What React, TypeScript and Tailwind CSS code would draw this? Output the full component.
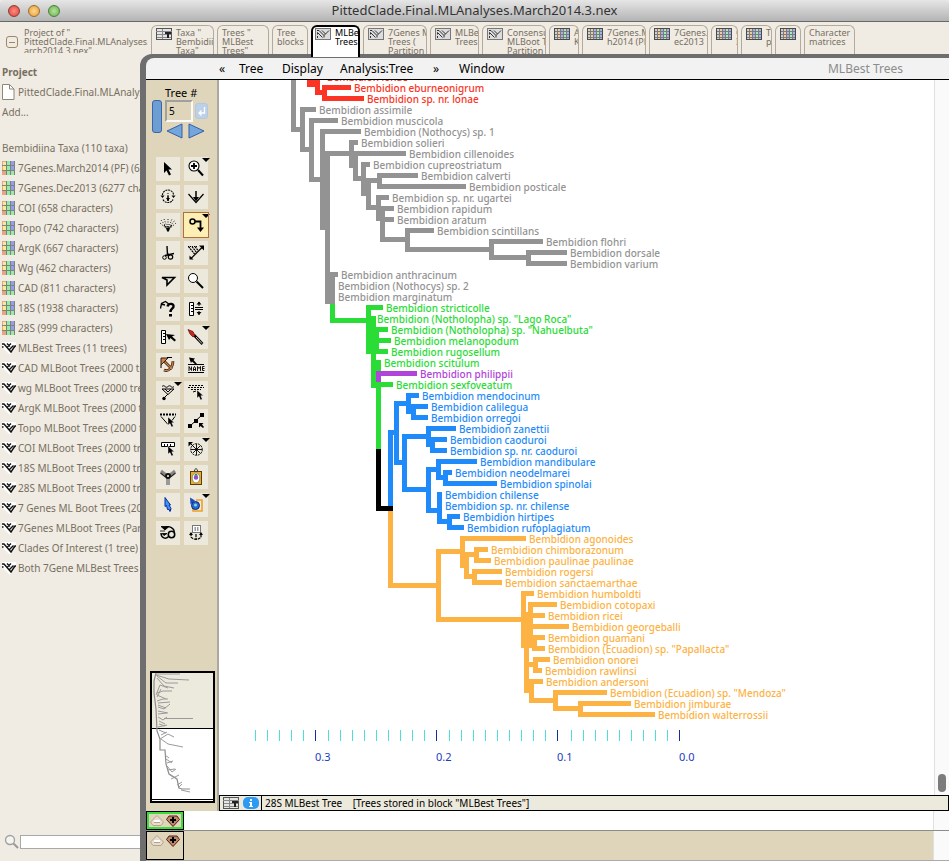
import type { ReactNode } from 'react';
import { clsx } from 'clsx';

type Rect = [number, number, number, number];

const FIRST_ROW = 107;
const ROW = 11;
const BAR = 5;

const GRAY = '#939393';
const RED = '#fb3425';
const GREEN = '#29dc36';
const PURPLE = '#b044d8';
const BLUE = '#1f8bfa';
const ORANGE = '#fdb244';

// color, start of the tip branch, end of the tip branch, taxon; top to bottom
const tips: [string, number, number, string][] = [
    [RED, 318, 324, 'Bembidion lonae'],
    [RED, 322, 351, 'Bembidion eburneonigrum'],
    [RED, 322, 364, 'Bembidion sp. nr. lonae'],
    [GRAY, 300, 316, 'Bembidion assimile'],
    [GRAY, 309, 338, 'Bembidion muscicola'],
    [GRAY, 320, 361, 'Bembidion (Nothocys) sp. 1'],
    [GRAY, 349, 358, 'Bembidion solieri'],
    [GRAY, 325, 406, 'Bembidion cillenoides'],
    [GRAY, 361, 370, 'Bembidion cupreostriatum'],
    [GRAY, 377, 418, 'Bembidion calverti'],
    [GRAY, 377, 466, 'Bembidion posticale'],
    [GRAY, 376, 389, 'Bembidion sp. nr. ugartei'],
    [GRAY, 376, 394, 'Bembidion rapidum'],
    [GRAY, 380, 394, 'Bembidion aratum'],
    [GRAY, 405, 434, 'Bembidion scintillans'],
    [GRAY, 489, 543, 'Bembidion flohri'],
    [GRAY, 526, 567, 'Bembidion dorsale'],
    [GRAY, 526, 567, 'Bembidion varium'],
    [GRAY, 325, 338, 'Bembidion anthracinum'],
    [GRAY, 325, 335, 'Bembidion (Nothocys) sp. 2'],
    [GRAY, 325, 335, 'Bembidion marginatum'],
    [GREEN, 366, 383, 'Bembidion stricticolle'],
    [GREEN, 366, 374, 'Bembidion (Notholopha) sp. "Lago Roca"'],
    [GREEN, 374, 388, 'Bembidion (Notholopha) sp. "Nahuelbuta"'],
    [GREEN, 374, 391, 'Bembidion melanopodum'],
    [GREEN, 366, 388, 'Bembidion rugosellum'],
    [GREEN, 371, 381, 'Bembidion scitulum'],
    [PURPLE, 376, 417, 'Bembidion philippii'],
    [GREEN, 371, 393, 'Bembidion sexfoveatum'],
    [BLUE, 406, 419, 'Bembidion mendocinum'],
    [BLUE, 406, 428, 'Bembidion calilegua'],
    [BLUE, 411, 428, 'Bembidion orregoi'],
    [BLUE, 426, 456, 'Bembidion zanettii'],
    [BLUE, 430, 447, 'Bembidion caoduroi'],
    [BLUE, 430, 447, 'Bembidion sp. nr. caoduroi'],
    [BLUE, 436, 477, 'Bembidion mandibulare'],
    [BLUE, 443, 452, 'Bembidion neodelmarei'],
    [BLUE, 443, 497, 'Bembidion spinolai'],
    [BLUE, 437, 442, 'Bembidion chilense'],
    [BLUE, 437, 442, 'Bembidion sp. nr. chilense'],
    [BLUE, 447, 460, 'Bembidion hirtipes'],
    [BLUE, 447, 464, 'Bembidion rufoplagiatum'],
    [ORANGE, 460, 526, 'Bembidion agonoides'],
    [ORANGE, 474, 488, 'Bembidion chimborazonum'],
    [ORANGE, 474, 491, 'Bembidion paulinae paulinae'],
    [ORANGE, 472, 502, 'Bembidion rogersi'],
    [ORANGE, 472, 502, 'Bembidion sanctaemarthae'],
    [ORANGE, 521, 534, 'Bembidion humboldti'],
    [ORANGE, 528, 557, 'Bembidion cotopaxi'],
    [ORANGE, 528, 545, 'Bembidion ricei'],
    [ORANGE, 528, 569, 'Bembidion georgeballi'],
    [ORANGE, 528, 545, 'Bembidion guamani'],
    [ORANGE, 532, 545, 'Bembidion (Ecuadion) sp. "Papallacta"'],
    [ORANGE, 533, 550, 'Bembidion onorei'],
    [ORANGE, 533, 542, 'Bembidion rawlinsi'],
    [ORANGE, 524, 543, 'Bembidion andersoni'],
    [ORANGE, 553, 607, 'Bembidion (Ecuadion) sp. "Mendoza"'],
    [ORANGE, 578, 631, 'Bembidion jimburae'],
    [ORANGE, 578, 655, 'Bembidion walterrossii'],
];

// Inner branches as x, y, width, height
const branches: [string, Rect[]][] = [
    [RED, [[307, 80, 8, 7], [315, 80, 5, 15], [315, 90, 7, 5], [322, 85, 5, 16]]],
    [GRAY, [
        [291, 80, 5, 52], [291, 127, 9, 5], [300, 107, 5, 45], [300, 147, 9, 5], [309, 118, 5, 64],
        [309, 177, 11, 5], [320, 129, 5, 101], [325, 151, 5, 153], [330, 272, 5, 32],
        [349, 140, 5, 28], [353, 156, 5, 25], [353, 176, 8, 5], [361, 162, 5, 34], [366, 178, 5, 32],
        [366, 178, 11, 5], [377, 173, 5, 16], [366, 205, 10, 5], [376, 195, 5, 26], [380, 206, 5, 36],
        [380, 237, 25, 5], [405, 228, 5, 24], [405, 247, 84, 5], [489, 239, 5, 21], [489, 255, 37, 5],
        [526, 250, 5, 16],
    ]],
    [GREEN, [
        [330, 304, 5, 19], [330, 318, 36, 5], [366, 305, 5, 49], [371, 316, 5, 72], [374, 327, 5, 27],
        [376, 360, 5, 11], [376, 382, 5, 67],
    ]],
    [PURPLE, [[376, 371, 5, 11]]],
    ['#000000', [[376, 449, 5, 62], [376, 506, 17, 5]]],
    [BLUE, [
        [388, 430, 5, 76], [388, 430, 6, 5], [394, 401, 5, 64], [394, 401, 12, 5], [406, 393, 5, 21],
        [411, 404, 5, 16], [394, 460, 8, 5], [402, 434, 5, 58], [402, 434, 24, 5], [426, 426, 5, 21],
        [430, 437, 5, 16], [402, 487, 24, 5], [426, 467, 5, 46], [426, 467, 10, 5], [436, 459, 5, 21],
        [436, 475, 7, 5], [443, 470, 5, 16], [426, 508, 11, 5], [437, 492, 5, 32], [437, 519, 10, 5],
        [447, 514, 5, 16],
    ]],
    [ORANGE, [
        [388, 511, 5, 77], [388, 583, 48, 5], [436, 549, 5, 73], [436, 549, 24, 5], [460, 536, 5, 32],
        [464, 552, 5, 27], [464, 552, 10, 5], [474, 547, 5, 16], [464, 574, 8, 5], [472, 569, 5, 16],
        [436, 617, 85, 5], [521, 591, 5, 57], [524, 612, 5, 81], [528, 602, 5, 46], [532, 635, 5, 16],
        [524, 662, 9, 5], [533, 657, 5, 16], [529, 679, 5, 24], [529, 698, 24, 5], [553, 690, 5, 21],
        [553, 706, 25, 5], [578, 701, 5, 16],
    ]],
];

const majorTicks: [number, string, number][] = [
    [315, '0.3', 5],
    [436, '0.2', 9],
    [557, '0.1', 9],
    [679, '0.0', 9],
];

function TreeCanvas() {
    return (
        <svg width="715" height="715" viewBox="219 80 715 715" className="block shrink-0" role="img" aria-label="28S MLBest Tree">
            <g shapeRendering="crispEdges">
                {branches.map(([color, rects]) =>
                    rects.map(([x, y, w, h], i) => <rect key={color + i} x={x} y={y} width={w} height={h} fill={color} />)
                )}
                {tips.map(([color, x1, x2, name], i) => (
                    <rect key={name} x={x1} y={FIRST_ROW + (i - 3) * ROW} width={x2 - x1} height={BAR} fill={color} />
                ))}
                {majorTicks.map(([x, label, minors]) => (
                    <g key={label}>
                        <rect x={x} y="730" width="1" height="11" fill="#12309c" />
                        {Array.from({ length: minors }, (_, i) => (
                            <rect key={i} x={x - 12 * (i + 1)} y="730" width="1" height="11" fill="#4fdcdc" />
                        ))}
                    </g>
                ))}
            </g>
            {tips.map(([color, , x2, name], i) => (
                <text key={name} x={x2 + 3} y={FIRST_ROW + (i - 3) * ROW + 7} fill={color} className="text-[10px] font-medium">
                    {name}
                </text>
            ))}
            {majorTicks.map(([x, label]) => (
                <text key={label} x={x} y="761" fill="#1c3cc0" className="text-[11px]">{label}</text>
            ))}
        </svg>
    );
}

/* ---------- small icons ---------- */

function TableIcon() {
    return (
        <svg width="16" height="12" viewBox="0 0 16 12" className="shrink-0" shapeRendering="crispEdges">
            <rect x="0.5" y="0.5" width="15" height="11" fill="#e4e4e4" stroke="#555" />
            <path d="M0 3.5h16M1 6.5h14M1 9.5h14M6.5 1v10" stroke="#888" />
            <path d="M9 4h6v2h-2v4h-2V6H9z" fill="#222" />
        </svg>
    );
}

function TreeBoxIcon() {
    return (
        <svg width="16" height="12" viewBox="0 0 16 12" className="shrink-0">
            <rect x="0.5" y="0.5" width="15" height="11" fill="#dcdcdc" stroke="#777" />
            <path d="M2 2.5h2l5 5 5-5M7 2.5l3.500 3.500M2.500 6.500v-2l5 5M2.500 8v2M9 7.500v2" stroke="#333" fill="none" />
        </svg>
    );
}

function MatrixBoxIcon() {
    return (
        <svg width="16" height="12" viewBox="0 0 16 12" className="shrink-0" shapeRendering="crispEdges">
            <rect width="16" height="12" fill="#d0d0d0" />
            <rect x="4" width="3" height="12" fill="#f4cc9c" />
            <rect x="7" width="3" height="12" fill="#a8b0f0" />
            <rect x="10" width="3" height="12" fill="#a4ecb4" />
            <rect x="13" width="3" height="12" fill="#a8b0f0" />
            <path d="M3.500 0v12M6.500 0v12M9.500 0v12M12.500 0v12M0 3.500h16M0 6.500h16M0 9.500h16" stroke="#7c7c7c" />
            <path d="M0.500 0.500h15v11h-15z" fill="none" stroke="#4a4a4a" />
        </svg>
    );
}

function MatrixIcon() {
    return (
        <svg width="13" height="14" viewBox="0 0 13 14" className="shrink-0" shapeRendering="crispEdges">
            <rect width="13" height="14" fill="#94eca8" />
            <rect width="4" height="14" fill="#e8a484" />
            <rect x="1" y="1" width="3" height="8" fill="#f4ec9c" />
            <rect x="9" width="3" height="9" fill="#989cf0" />
            <path d="M4.500 0v14M8.500 0v14M12.500 0v14M0 4.500h13M0 9.500h13" stroke="#7c8478" />
        </svg>
    );
}

function TreesIcon() {
    return (
        <svg width="14" height="12" viewBox="0 0 14 12" className="shrink-0">
            <path d="M0 0h14v4l-5 8H7L0 5z" fill="#fff" />
            <path d="M0 2h2l7 8 4-6h1M5 5.500l4-4M7 8l4.500-4.500M5 1.500l3 3M0 5h1.500" stroke="#111" fill="none" strokeWidth="1.400" />
        </svg>
    );
}

function PageIcon() {
    return (
        <svg width="13" height="16" viewBox="0 0 13 16" className="shrink-0">
            <path d="M.500 .500h7l4.500 4.500v10.500H.500z" fill="#fff" stroke="#8c8878" />
            <path d="M7.500 .500V5H12" fill="none" stroke="#8c8878" />
        </svg>
    );
}

function CladeButton({ plus }: { plus?: boolean }) {
    return (
        <button className="h-3 w-[14px]" aria-label={plus ? 'Enlarge panel' : 'Shrink panel'}>
            <svg width="14" height="12" viewBox="0 0 14 12" className="block">
                {plus ? (
                    <>
                        <path d="M3 1h8l2.500 3.500L7 11.500.500 4.500z" fill="#b98a68" stroke="#5c1a10" />
                        <path d="M7 2v6M4 5h6" stroke="#000" strokeWidth="2" />
                    </>
                ) : (
                    <>
                        <path d="M7 .500l6.500 6.500L11 10.500H3L.500 7z" fill="#e8dccb" stroke="#b5a38f" />
                        <path d="M4 6h6" stroke="#fff" strokeWidth="2" />
                        <path d="M4 7.500h6" stroke="#b5a38f" />
                    </>
                )}
            </svg>
        </button>
    );
}

/* ---------- tool palette ---------- */

const pointer = (x: number, y: number) => (
    <path d={`M${x} ${y}v8l2-1.500 1.500 3.500 1.800-.800-1.500-3.500h2.500z`} fill="#000" stroke="#fff" strokeWidth=".400" />
);

const tools: { name: string; menu?: boolean; selected?: boolean; icon: ReactNode }[] = [
    { name: 'Arrow', icon: <path d="M8 5v11l2.500-2.500 2.500 5 2-1-2.500-5H16z" fill="#000" /> },
    { name: 'Zoom', menu: true, icon: <><circle cx="10" cy="9" r="5" fill="#fff" stroke="#000" strokeWidth="1.100" /><path d="M7 9h6M10 6v6" stroke="#000" strokeWidth="1.800" /><path d="M14 13l5 5.500" stroke="#000" strokeWidth="2" /></> },
    { name: 'Rotate', icon: <><path d="M6.500 10a5.500 5 0 0 1 11 0M7 14.500c1.500 4 8.500 4 10 0" fill="none" stroke="#000" strokeWidth="1.100" strokeDasharray="2 .700" /><path d="M4.500 10.500h4l-2 2.500zM15.500 10.500h4l-2 2.500z" fill="#000" /><path d="M12 8v4" stroke="#000" strokeDasharray="1 1" /><path d="M12 11v5" stroke="#000" strokeWidth="1.500" /><path d="M10 13h4l-2 3z" fill="#000" /></> },
    { name: 'Collapse', icon: <><path d="M4.500 9l7.500 8.500L19.500 9" fill="none" stroke="#000" strokeWidth="1.200" /><path d="M12 6v8" stroke="#000" strokeWidth="1.500" /><path d="M9 12h6l-3 4.500z" fill="#000" /></> },
    { name: 'Fan', icon: <><path d="M5 7l7 9 7-9M8 6l4 10 4-10M12 6v8M4 10l8 7 8-7" fill="none" stroke="#000" strokeWidth=".900" strokeDasharray="1 1.500" /><path d="M8 12l4 5 4-5M12 13v6" fill="none" stroke="#000" /><circle cx="12" cy="16.500" r="1.500" fill="#000" /></> },
    { name: 'Reroot', menu: true, selected: true, icon: <><circle cx="8.500" cy="8.500" r="2.500" fill="none" stroke="#000" strokeWidth="1.500" /><path d="M11 8.500h5.500V16" fill="none" stroke="#000" strokeWidth="1.800" /><path d="M13 14.500h7L16.500 19z" fill="#000" /></> },
    { name: 'Scissors', icon: <><path d="M11 5l.500 9M18 12.500l-9 2" stroke="#000" strokeWidth="1.400" /><circle cx="8.500" cy="16.500" r="1.800" fill="none" stroke="#000" /><circle cx="14.500" cy="16" r="2.200" fill="none" stroke="#000" strokeWidth="1.200" /><path d="M11.500 12l1 3" stroke="#000" strokeWidth="1.500" /></> },
    { name: 'Ladderize', icon: <><path d="M7 17.500L18 6.500" stroke="#000" strokeWidth="1.200" /><path d="M15 4.500h5v5zM5.500 14.500v4h4z" fill="#000" /><path d="M4.500 5.500l6.500 8M8 5.500l4.500 6M11 5.500l3 4" stroke="#000" strokeWidth="1.200" strokeDasharray="2 .600" /><path d="M4 5.500h10" stroke="#000" strokeDasharray="1 1" /></> },
    { name: 'Triangle', icon: <path d="M6 8.500h12.500L11 16v-5z" fill="none" stroke="#000" strokeWidth="1.600" /> },
    { name: 'Magnifier', icon: <><circle cx="9" cy="9" r="4.500" fill="#fff" stroke="#000" /><path d="M12.500 12.500l6.500 6.500" stroke="#000" strokeWidth="2" /></> },
    { name: 'Query branch', icon: <><path d="M4.500 11.500l1-5 4-2 4 3M5 7l4 1" fill="none" stroke="#000" strokeWidth="1.300" /><path d="M11.500 9.500c1-4 6.500-3 6 0 0 2-3 2-3 5.500" fill="none" stroke="#000" strokeWidth="2.400" /><path d="M13 17h3v2.500h-3z" fill="#000" /></> },
    { name: 'Branch length', icon: <><path d="M5.500 5.500h4v13h-4zM7 8.500h2M7 11.500h2M7 14.500h2" fill="#fff" stroke="#000" /><path d="M11 10.500h8M11 12.500h8M15 5v4M15 14v4" stroke="#000" /><path d="M12.500 7.500h5L15 4.500zM12.500 15h5L15 18z" fill="#000" /></> },
    { name: 'Measure', icon: <><path d="M5.500 5.500h4v13h-4zM7 8.500h2M7 11.500h2M7 14.500h2" fill="#fff" stroke="#000" /><path d="M10 9l9 1-3 1.500 4 3.500-1.500 1.500-4-3.500-1.500 2z" fill="#000" /></> },
    { name: 'Paint', menu: true, icon: <><path d="M10 10l8.500 9" stroke="#000" strokeWidth="2.600" /><path d="M12 12l6 6.500" stroke="#e8ddd4" strokeWidth=".900" /><path d="M4 4.500l5 2 2 4-2 1.500-3-3z" fill="#c8281c" stroke="#400" strokeWidth=".600" /></> },
    { name: 'Swap', icon: <><path d="M8 8l8 8M8 17c4 2 9-2 9-9" fill="none" stroke="#3c1c08" strokeWidth="2.600" /><path d="M8 8l8 8M8 17c4 2 9-2 9-9" fill="none" stroke="#c88450" strokeWidth="1.200" /><path d="M5 5h7L5 12z" fill="#c88450" stroke="#3c1c08" /><path d="M11 4.500h5M5 12v3" fill="none" stroke="#000" /></> },
    { name: 'Name', icon: <><path d="M5 4.500l6 1-1.500 1.500 3.500 4-1 1-4-3.500-1 1.500z" fill="#000" /><path d="M4 11.500h16M4 19.500h16" stroke="#000" /><path d="M5 18v-4.500l2.500 4V13.500M9.500 18v-3l1-1.500 1 1.500v3M9.500 16.500h2M13.500 18v-4.500l1.500 2 1.500-2V18M20.500 13.500h-2v4h2M18.500 15.500h2" fill="none" stroke="#000" strokeWidth=".900" /></> },
    { name: 'Select clade', menu: true, icon: <><path d="M6 8h12l-6 5.500zM12 13l-3 3" fill="none" stroke="#000" /><path d="M6 5.500c1-1 2-1 3 0s2 1 3 0 2-1 3 0 2 1 3 0M9 8l3 3 3-3" fill="none" stroke="#000" /><circle cx="8" cy="17.500" r="1.700" fill="#000" /></> },
    { name: 'Select taxa', icon: <><path d="M5 4.500h14M4 6.500h16M7 8.500h10" stroke="#000" strokeDasharray="2 1" /><path d="M9 11l3-1" stroke="#000" />{pointer(13, 9)}</> },
    { name: 'Select terminals', icon: <><path d="M4 5.500h16" stroke="#000" strokeWidth="2" strokeDasharray="2 1" /><path d="M5 7.500l7 8M19 7.500l-3 4" stroke="#000" />{pointer(12, 8)}</> },
    { name: 'Connect', icon: <><path d="M6 17L18 6" stroke="#000" /><path d="M4 15h4v4H4zM10 10h4v4h-4zM16 4h4v4h-4z" fill="#000" /><path d="M15 14h4.500l-1.500 1.500 2 2.500-1 1-2.500-2-1.500 1.500z" fill="#000" /></> },
    { name: 'Scale', icon: <><path d="M5.500 5.500h13v4h-13zM8.500 7v2M11.500 7v2M14.500 7v2" fill="#fff" stroke="#000" />{pointer(12, 9)}</> },
    { name: 'Circle tree', menu: true, icon: <><circle cx="12.500" cy="12.500" r="5.800" fill="none" stroke="#000" strokeDasharray="2 .800" /><path d="M12.500 7v11M7 12.500h11M9 9l7 7M16 9l-7 7" stroke="#000" strokeWidth=".900" /><path d="M4.500 5h4.500l-4.500 4.500z" fill="#000" /><path d="M6 6l4 4" stroke="#000" /></> },
    { name: 'Branch join', icon: <><path d="M5 6l5 4M19 6l-5 4" stroke="#888" strokeWidth="3" /><path d="M12 12v8" stroke="#999" strokeWidth="4" /><path d="M4.500 8l5 4M19.500 8l-5 4" stroke="#222" strokeWidth="1.200" /><circle cx="12" cy="11" r="3" fill="#111" /><circle cx="12" cy="11" r="1" fill="#fff" /></> },
    { name: 'Picture', icon: <><path d="M10.500 6c0-3 3-3 3 0" fill="none" stroke="#333" /><rect x="6.500" y="6.500" width="11" height="13" fill="#e4b030" stroke="#5c3c08" /><ellipse cx="12" cy="13" rx="3.800" ry="5" fill="#fff" stroke="#444" strokeWidth=".500" /><circle cx="12" cy="12.500" r="2.200" fill="#8c50c8" /><path d="M10 10.500c1-2 3-2 4 0z" fill="#287c38" /></> },
    { name: 'Blue arrow', icon: <path d="M9 4.500v9l1.500-1 1 4h1.500l1 2 1-2h-1l1-1-2-3.500h1.500z" fill="#3c94f8" stroke="#0c2c9c" /> },
    { name: 'Blue ball', menu: true, icon: <><path d="M12 7h6v11h-9v-4" fill="none" stroke="#f0a020" strokeWidth="1.600" /><path d="M6 4.500l5 3-4.500 4z" fill="#1c4cc0" /><circle cx="11.500" cy="12.500" r="4" fill="#2468dc" stroke="#0c2474" /><circle cx="11.500" cy="12" r="1.500" fill="#7ce0c0" /></> },
    { name: 'Undo moves', icon: <><path d="M9 6.500c4-2.500 10 1 9 5M5 12c0 5 5 7 8 3" fill="none" stroke="#000" strokeWidth="1.400" /><circle cx="15.500" cy="13.500" r="3.200" fill="none" stroke="#000" strokeWidth="1.600" /><path d="M5 5.500h8L9 9zM4 10h5M6 12.500h5l-3 2z" fill="#000" stroke="#000" strokeWidth=".800" /></> },
    { name: 'Unroot', icon: <><rect x="8.500" y="4.500" width="8" height="7" fill="#fff" stroke="#777" /><path d="M10.500 7h1.500M13 7h1.500M10.500 9h1.500M13 9h1.500" stroke="#333" /><path d="M7 12v4c2 3 8 3 10 0v-4M12 13v6" fill="none" stroke="#000" strokeWidth="1.200" strokeDasharray="3 .800" /><path d="M5 14h4l-2-3zM15 14h4l-2-3z" fill="#000" /></> },
];

function ToolPalette() {
    return (
        <div className="ml-[10px] mt-[18px] grid grid-cols-[24px_24px] gap-1">
            {tools.map((tool) => (
                <button
                    key={tool.name}
                    aria-label={tool.name}
                    className={clsx('size-6', tool.selected ? 'bg-[#fdeeb4] outline outline-[#b0703c]' : 'bg-[#ece8dc]')}
                >
                    <svg width="24" height="24" viewBox="0 0 24 24" className="block overflow-visible">
                        {tool.icon}
                        {tool.menu && <path d="M18 1h8l-4 4z" fill="#000" />}
                    </svg>
                </button>
            ))}
        </div>
    );
}

function Overview() {
    return (
        <svg width="65" height="132" viewBox="0 0 65 132" className="mb-2 ml-1 block shrink-0">
            <rect x="1" y="1" width="63" height="130" fill="#fff" stroke="#000" strokeWidth="2" />
            <rect x="2" y="2" width="61" height="55" fill="#ece9dd" />
            <path d="M2 57.500h61M2 128.500h61" stroke="#000" />
            <path
                d="M6 2L4 10v12l2 16 1 22 3 8v11h5l1 14 3 10 8 5 2 9 3 1h8"
                fill="none"
                stroke="#8c8c8c"
                strokeWidth="1.200"
            />
            <path
                d="M6 3h24M6 4l13 4 20 1M7 5l9 7h12M7 7l7 8 10 2M6 24l4-10 8 3M7 22l6-2h9M7 24l9 4M7 26l4-8M7 30l6-2h5M8 32l12-1M8 34l8 3M8 36l6 2 6-5M8 40l10 2M8 43l9-1M8 46l5 3 4-3M14 47.500h29M9 50l6 3M9 53l6 2M8 56l9-2M9 59l7 3M10 68l8-5 6 3M11 68l7 5 15 3M11 64l6-3M15 84l4 3M16 88l6 4M17 92l6-2M17 95l5 6 4-3M17 99l8-1M20 104l7 4M21 108l8-4M27 114l5-3M28 117l4-4M31 119l9 2"
                fill="none"
                stroke="#9a9a9a"
            />
        </svg>
    );
}

/* ---------- project panel and tabs ---------- */

const files: [string, 'matrix' | 'trees'][] = [
    ['7Genes.March2014 (PF) (6277 characters)', 'matrix'],
    ['7Genes.Dec2013 (6277 characters)', 'matrix'],
    ['COI (658 characters)', 'matrix'],
    ['Topo (742 characters)', 'matrix'],
    ['ArgK (667 characters)', 'matrix'],
    ['Wg (462 characters)', 'matrix'],
    ['CAD (811 characters)', 'matrix'],
    ['18S (1938 characters)', 'matrix'],
    ['28S (999 characters)', 'matrix'],
    ['MLBest Trees (11 trees)', 'trees'],
    ['CAD MLBoot Trees (2000 trees)', 'trees'],
    ['wg MLBoot Trees (2000 trees)', 'trees'],
    ['ArgK MLBoot Trees (2000 trees)', 'trees'],
    ['Topo MLBoot Trees (2000 trees)', 'trees'],
    ['COI MLBoot Trees (2000 trees)', 'trees'],
    ['18S MLBoot Trees (2000 trees)', 'trees'],
    ['28S MLBoot Trees (2000 trees)', 'trees'],
    ['7 Genes ML Boot Trees (2000 trees)', 'trees'],
    ['7Genes MLBoot Trees (Partition)', 'trees'],
    ['Clades Of Interest (1 tree)', 'trees'],
    ['Both 7Gene MLBest Trees', 'trees'],
];

const tabs: { width: string; icon?: ReactNode; lines: string[]; active?: boolean }[] = [
    { width: 'w-[63px]', icon: <TableIcon />, lines: ['Taxa "', 'Bembidiina', 'Taxa"'] },
    { width: 'w-[52px]', lines: ['Trees "', 'MLBest', 'Trees"'] },
    { width: 'w-9', lines: ['Tree', 'blocks'] },
    { width: 'w-[49px]', icon: <TreeBoxIcon />, lines: ['MLBest', 'Trees'], active: true },
    { width: 'w-16', icon: <TreeBoxIcon />, lines: ['7Genes ML', 'Trees (', 'Partition'] },
    { width: 'w-[49px]', icon: <TreeBoxIcon />, lines: ['MLBest', 'Trees'] },
    { width: 'w-16', icon: <TreeBoxIcon />, lines: ['Consensus', 'MLBoot Tr', 'Partition'] },
    { width: 'w-[30px]', icon: <MatrixBoxIcon />, lines: ['A', 'K'] },
    { width: 'w-16', icon: <MatrixBoxIcon />, lines: ['7Genes.M', 'h2014 (PF)'] },
    { width: 'w-[59px]', icon: <MatrixBoxIcon />, lines: ['7Genes.D', 'ec2013'] },
    { width: 'w-[27px]', icon: <MatrixBoxIcon />, lines: ['C', 'I'] },
    { width: 'w-[31px]', icon: <MatrixBoxIcon />, lines: ['T', 'p'] },
    { width: 'w-[26px]', icon: <MatrixBoxIcon />, lines: ['W', 'g'] },
    { width: 'w-[51px]', lines: ['Character', 'matrices'] },
];

function TabStrip() {
    return (
        <div className="flex h-8 shrink-0 pt-[3px] text-[9px] leading-[9px] text-[#77705f]">
            <div className="flex w-[151px] shrink-0 items-start overflow-hidden">
                <button className="ml-[6px] mr-[6px] mt-[11px] flex size-3 shrink-0 items-center justify-center rounded-[3px] border border-[#9c8868]" aria-label="Collapse project">
                    <span className="h-px w-[6px] bg-[#9c8868]" />
                </button>
                <div className="h-7 w-[124px] overflow-hidden whitespace-nowrap pt-[3px]">
                    Project of "<br />PittedClade.Final.MLAnalyses.M<br />arch2014.3.nex"
                </div>
            </div>
            <div className="flex min-w-0 flex-1 gap-[3px]">
                {tabs.map((tab, i) => (
                    <button
                        key={i}
                        className={clsx(
                            'flex shrink-0 items-start overflow-hidden whitespace-nowrap rounded-t-md text-left',
                            tab.width,
                            tab.active
                                ? 'relative z-10 h-8 border-2 border-b-0 border-black bg-white pl-[2px] pt-px text-black'
                                : 'h-[29px] border border-b-0 border-[#b4aa9c] pl-1 pt-[2px]'
                        )}
                    >
                        {tab.icon && <span className="mr-1 shrink-0">{tab.icon}</span>}
                        <span>
                            {tab.lines.map((line) => <span key={line} className="block">{line}</span>)}
                        </span>
                    </button>
                ))}
            </div>
        </div>
    );
}

function ProjectPanel() {
    return (
        <aside className="flex w-[140px] shrink-0 flex-col overflow-hidden whitespace-nowrap pt-2 text-[10px] leading-5 text-[#77705f]">
            <h2 className="pl-[2px] font-bold">Project</h2>
            <a href="#" className="flex items-center gap-[3px] pl-[2px]"><PageIcon />PittedClade.Final.MLAnalyses</a>
            <a href="#" className="pl-[2px]">Add...</a>
            <p className="mt-4 pl-[2px]">Bembidiina Taxa (110 taxa)</p>
            <ul>
                {files.map(([name, kind]) => (
                    <li key={name}>
                        <a href="#" className="flex h-5 items-center pl-[2px]">
                            <span className="w-4 shrink-0">{kind === 'matrix' ? <MatrixIcon /> : <TreesIcon />}</span>
                            {name}
                        </a>
                    </li>
                ))}
            </ul>
            <div className="mt-auto flex items-center pb-[11px] pl-1">
                <svg width="16" height="16" viewBox="0 0 16 16" className="shrink-0">
                    <circle cx="6" cy="6" r="4.500" fill="#f4f4f0" stroke="#a0a0a0" strokeWidth="1.300" />
                    <path d="M9.500 9.500l4.500 4.500" stroke="#999" strokeWidth="2" />
                </svg>
                <input aria-label="Search" className="h-[14px] min-w-0 flex-1 border border-r-0 border-[#a8a8a8] bg-white" />
            </div>
        </aside>
    );
}

function MenuBar() {
    return (
        <div className="flex h-[22px] shrink-0 items-center rounded-tl-lg border-b border-black bg-[#f2f2f2] pl-[73px] text-xs text-black">
            <button className="w-5 text-left">«</button>
            <button className="w-[43px] text-left">Tree</button>
            <button className="w-[58px] text-left">Display</button>
            <button className="w-[93px] text-left">Analysis:Tree</button>
            <button className="w-[26px] text-left">»</button>
            <button>Window</button>
            <span className="ml-auto mr-[46px] text-[#8c8c8c]">MLBest Trees</span>
        </div>
    );
}

function TreeChooser() {
    return (
        <div className="pl-[6px] pt-[6px]">
            <label htmlFor="tree-number" className="ml-[13px] block text-[11px] leading-[14px]">Tree #</label>
            <div className="flex gap-[3px]">
                <button className="h-[33px] w-[10px] rounded-[3px] border border-[#3c66a8] bg-[#6c9ed4]" aria-label="Tree info" />
                <div>
                    <div className="flex items-center gap-[2px]">
                        <input
                            id="tree-number"
                            defaultValue="5"
                            className="h-[22px] w-7 border-2 border-[#fafafa] border-l-[#a0a0a0] border-t-[#a0a0a0] bg-[#dfd5ba] px-[2px] text-[10px]"
                        />
                        <button className="flex h-4 w-[13px] items-center justify-center rounded-[3px] border border-[#b0c8e4] bg-[#bcd0e8]" aria-label="Go to tree">
                            <svg width="9" height="10" viewBox="0 0 9 10"><path d="M7.500 1v6H2M4.500 4.500L2 7l2.500 2.500" fill="none" stroke="#fff" strokeWidth="1.300" /></svg>
                        </button>
                    </div>
                    <div className="mt-px flex gap-[5px] pl-px">
                        <button aria-label="Previous tree">
                            <svg width="17" height="16" viewBox="0 0 17 16" className="block"><path d="M16 1v14L1 8z" fill="#74a6dc" stroke="#3460a8" strokeLinejoin="round" /></svg>
                        </button>
                        <button aria-label="Next tree">
                            <svg width="17" height="16" viewBox="0 0 17 16" className="block"><path d="M1 1v14l15-7z" fill="#74a6dc" stroke="#3460a8" strokeLinejoin="round" /></svg>
                        </button>
                    </div>
                </div>
            </div>
        </div>
    );
}

function StatusBar() {
    return (
        <div className="flex h-4 shrink-0 items-center border border-black bg-[#ece9dd] text-[10px] text-black">
            <div className="flex h-full w-[42px] items-center gap-1 border-r border-black pl-[3px]">
                <TableIcon />
                <svg width="16" height="12" viewBox="0 0 16 12">
                    <rect width="16" height="12" rx="5" fill="#2a9af4" />
                    <path d="M7 2h2v2H7zM6 5h3v4h1v1H6V9h1V6H6z" fill="#fff" />
                </svg>
            </div>
            <p className="whitespace-pre pl-[3px]">{'28S MLBest Tree    [Trees stored in block "MLBest Trees"]'}</p>
        </div>
    );
}

export default function App() {
    return (
        <div className="flex h-screen min-h-[861px] flex-col overflow-hidden bg-[#f0ebe3] font-['Noto_Sans','Open_Sans',sans-serif]">
            <header className="relative flex h-[22px] shrink-0 items-center justify-center rounded-t border-b border-[#686868] bg-linear-to-b from-[#e6e6e6] to-[#b4b4b4]">
                <div className="absolute left-2 flex gap-2">
                    <button className="size-3 rounded-full border border-[#8c3c34] bg-radial from-[#ff8c84] to-[#dc3c34]" aria-label="Close" />
                    <button className="size-3 rounded-full border border-[#a06c28] bg-radial from-[#ffd88c] to-[#e49c34]" aria-label="Minimize" />
                    <button className="size-3 rounded-full border border-[#48803c] bg-radial from-[#b4e49c] to-[#68b048]" aria-label="Zoom window" />
                </div>
                <h1 className="text-[13px] text-[#333]">PittedClade.Final.MLAnalyses.March2014.3.nex</h1>
            </header>

            <TabStrip />

            <div className="flex min-h-0 flex-1">
                <ProjectPanel />

                <main className="flex min-w-0 flex-1 flex-col rounded-tl-xl bg-[#6e6e6e] pl-[6px] pt-1">
                    <MenuBar />
                    <div className="flex min-h-0 flex-1">
                        <div className="flex w-[73px] shrink-0 flex-col border-r-2 border-[#aaa8a0] bg-[#dfd5ba]">
                            <TreeChooser />
                            <ToolPalette />
                            <div className="flex-1" />
                            <Overview />
                        </div>
                        <div className="flex min-w-0 flex-1 flex-col">
                            <div className="flex min-h-0 flex-1 bg-white">
                                <div className="min-w-0 flex-1 overflow-hidden">
                                    <TreeCanvas />
                                </div>
                                <div className="flex w-[15px] shrink-0 items-end justify-center border-l border-[#e0e0e0] bg-[#fafafa] pb-[3px]">
                                    <div className="h-[18px] w-2 rounded-full bg-[#7c7c7c]" />
                                </div>
                            </div>
                            <StatusBar />
                        </div>
                    </div>

                    <div className="flex h-5 shrink-0 border-b border-[#8c8c8c] bg-white">
                        <div className="w-[38px] border border-black">
                            <div className="flex h-full items-center gap-[2px] border-2 border-[#3cdc3c] bg-[#dfd5ba] pl-px">
                                <CladeButton />
                                <CladeButton plus />
                            </div>
                        </div>
                        <div className="ml-auto w-4 border-l border-[#e0e0e0] bg-[#fafafa]" />
                    </div>
                    <div className="flex h-[30px] shrink-0 border-b border-[#aaa] bg-[#dfd5ba]">
                        <div className="flex w-[38px] items-start gap-[2px] border border-black pl-[3px] pt-[3px]">
                            <CladeButton />
                            <CladeButton plus />
                        </div>
                        <div className="ml-auto w-4 border-l border-[#e0e0e0] bg-[#fafafa]" />
                    </div>
                </main>
            </div>
        </div>
    );
}
